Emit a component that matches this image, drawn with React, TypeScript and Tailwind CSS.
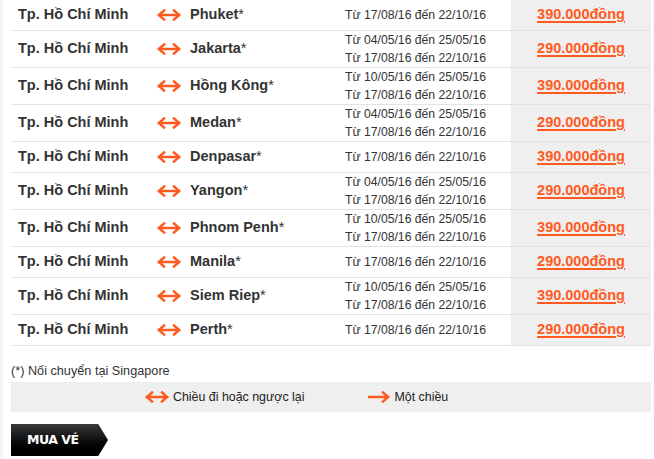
import React from 'react';

type Route = { dest: string; dates: string[]; price: string };

const routes: Route[] = [
  { dest: 'Phuket', dates: ['Từ 17/08/16 đến 22/10/16'], price: '390.000đồng' },
  { dest: 'Jakarta', dates: ['Từ 04/05/16 đến 25/05/16', 'Từ 17/08/16 đến 22/10/16'], price: '290.000đồng' },
  { dest: 'Hồng Kông', dates: ['Từ 10/05/16 đến 25/05/16', 'Từ 17/08/16 đến 22/10/16'], price: '390.000đồng' },
  { dest: 'Medan', dates: ['Từ 04/05/16 đến 25/05/16', 'Từ 17/08/16 đến 22/10/16'], price: '290.000đồng' },
  { dest: 'Denpasar', dates: ['Từ 17/08/16 đến 22/10/16'], price: '390.000đồng' },
  { dest: 'Yangon', dates: ['Từ 04/05/16 đến 25/05/16', 'Từ 17/08/16 đến 22/10/16'], price: '290.000đồng' },
  { dest: 'Phnom Penh', dates: ['Từ 10/05/16 đến 25/05/16', 'Từ 17/08/16 đến 22/10/16'], price: '390.000đồng' },
  { dest: 'Manila', dates: ['Từ 17/08/16 đến 22/10/16'], price: '290.000đồng' },
  { dest: 'Siem Riep', dates: ['Từ 10/05/16 đến 25/05/16', 'Từ 17/08/16 đến 22/10/16'], price: '390.000đồng' },
  { dest: 'Perth', dates: ['Từ 17/08/16 đến 22/10/16'], price: '290.000đồng' },
];

const BothWays = () => (
  <svg width="24" height="12" viewBox="0 0 24 12" fill="none" stroke="#ff5a1f" strokeWidth="2.5" strokeLinecap="square">
    <line x1="2" y1="6" x2="22" y2="6" />
    <polyline points="7,1.5 2,6 7,10.5" />
    <polyline points="17,1.5 22,6 17,10.5" />
  </svg>
);

const OneWay = () => (
  <svg width="22" height="12" viewBox="0 0 22 12" fill="none" stroke="#ff5a1f" strokeWidth="2.5" strokeLinecap="square">
    <line x1="1" y1="6" x2="20" y2="6" />
    <polyline points="15,1.5 20,6 15,10.5" />
  </svg>
);

const App: React.FC = () => {
  return (
    <div className="flex min-h-[459px] w-[654px] bg-white font-['Liberation_Sans',Arial,sans-serif] text-[#333]">
      <div className="w-[3px] shrink-0 bg-[#f4f4f4]" />
      <div className="ml-[8px] w-[640px]">
        <div>
          {routes.map((r, i) => (
            <div
              key={i}
              className={`grid grid-cols-[146px_33px_155px_166px_140px] border-b border-[#e3e3e3] ${r.dates.length > 1 ? 'h-[37px]' : 'h-[31px]'}`}
            >
              <div className="flex items-center pl-[7px] text-[14.5px] font-bold">Tp. Hồ Chí Minh</div>
              <div className="flex items-center">
                <BothWays />
              </div>
              <div className="flex items-center text-[14.5px] font-bold">
                {r.dest}
                <span className="font-normal">*</span>
              </div>
              <div className="flex flex-col justify-center text-[12.2px] leading-[18px]">
                {r.dates.map((d, j) => (
                  <span key={j}>{d}</span>
                ))}
              </div>
              <div className="flex items-center justify-center bg-[#efefef]">
                <a href="#" className="text-[14.5px] font-bold text-[#ff5a1f] underline decoration-[1.5px] underline-offset-[2px]">
                  {r.price}
                </a>
              </div>
            </div>
          ))}
        </div>
        <p className="mt-[16px] text-[12.7px] leading-[18px]">(*) Nối chuyển tại Singapore</p>
        <div className="mt-[2px] flex h-[30px] items-center bg-[#efefef] pl-[134px] text-[12.4px] text-[#222]">
          <div className="flex items-center gap-[4px]">
            <BothWays />
            <span>Chiều đi hoặc ngược lại</span>
          </div>
          <div className="ml-[64px] flex items-center gap-[4px]">
            <OneWay />
            <span>Một chiều</span>
          </div>
        </div>
        <button className="mt-[12px] flex h-[32px] w-[97px] items-center bg-gradient-to-b from-[#3a3a3a] to-[#000] pl-[16px] font-['DejaVu_Sans',sans-serif] text-[12.5px] font-bold tracking-[-0.5px] text-white [clip-path:polygon(0_0,90%_0,100%_50%,90%_100%,0_100%)]">
          MUA VÉ
        </button>
      </div>
    </div>
  );
};

export default App;
